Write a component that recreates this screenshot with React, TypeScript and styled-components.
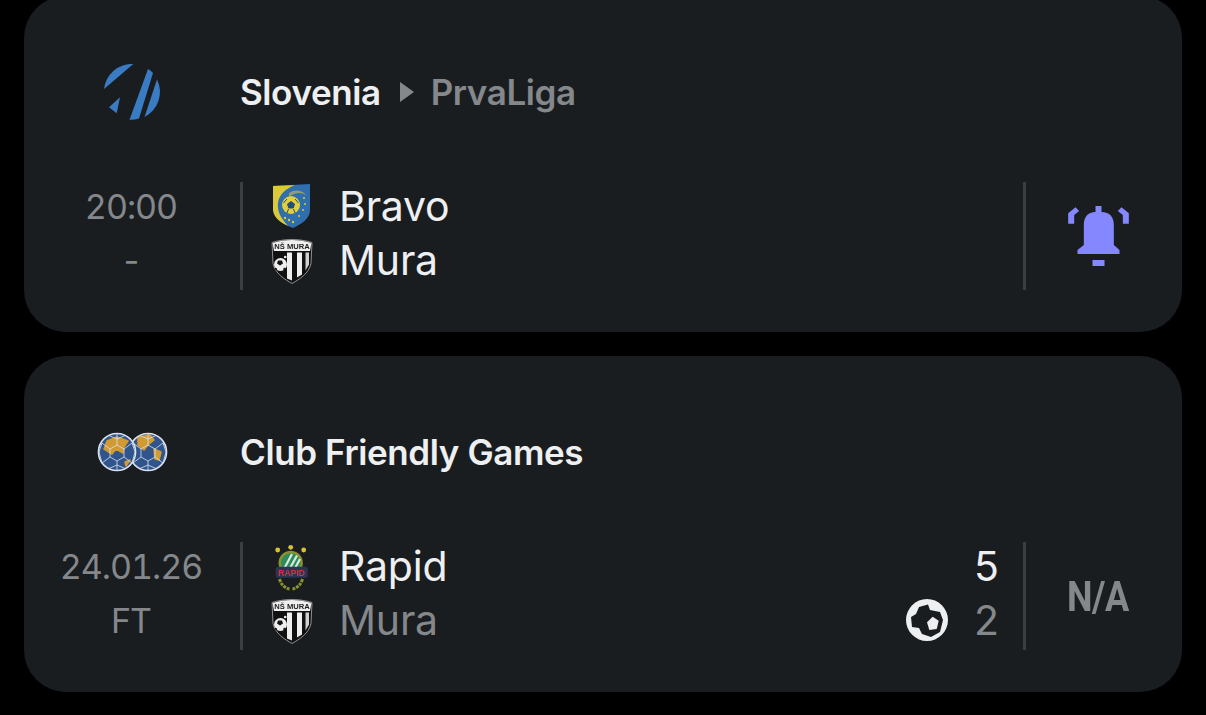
import React from "react";
import styled, { createGlobalStyle } from "styled-components";

const Global = createGlobalStyle`
  html, body { margin: 0; padding: 0; background: #000; overflow: hidden; }
  body { font-family: Inter, "Noto Sans", sans-serif; }
`;

const Page = styled.div`
  display: flex;
  flex-direction: column;
  gap: 24px;
  margin-top: -4px;
  padding: 0 24px;
`;

const Card = styled.section`
  height: 336px;
  background: #1a1d20;
  border-radius: 42px;
  display: flex;
  flex-direction: column;
`;

const Header = styled.header`
  height: 186px;
  display: flex;
  align-items: center;
  padding-top: 6px;
  box-sizing: border-box;
`;

const HeaderLogo = styled.div`
  width: 216px;
  display: flex;
  justify-content: center;
  align-items: center;
  filter: blur(0.3px);
`;

const Title = styled.h2`
  margin: 0;
  display: flex;
  align-items: center;
  font-size: 35px;
  font-weight: 600;
  letter-spacing: -0.4px;
  color: #eeeff1;
`;

const Sub = styled.span`
  color: #85888b;
`;

const Arrow = styled.svg`
  width: 14px;
  height: 20px;
  margin: 0 17px 0 19px;
  fill: #85888b;
`;

const Match = styled.div`
  height: 108px;
  display: flex;
`;

const TimeCol = styled.div`
  width: 214px;
  display: flex;
  flex-direction: column;
  align-items: center;
  font-size: 34px;
  color: #85888b;
  margin-right: 2px;
  font-variant-numeric: tabular-nums;
`;

const TimeLine = styled.div`
  height: 54px;
  line-height: 50px;
  letter-spacing: -1px;
`;

const Teams = styled.div`
  flex: 1;
  border-left: 3px solid #3c3f42;
  border-right: 3px solid #3c3f42;
  display: flex;
  flex-direction: column;
  padding: 0 24px 0 26px;
`;

const TeamRow = styled.div`
  height: 54px;
  display: flex;
  align-items: center;
`;

const Crest = styled.div`
  width: 46px;
  height: 46px;
  flex: none;
  display: flex;
  justify-content: center;
  align-items: center;
  margin: 0 24px 6px 0;
  filter: blur(0.35px);
`;

const Name = styled.span<{ $dim?: boolean }>`
  flex: 1;
  font-size: 41px;
  letter-spacing: -0.2px;
  color: ${(p) => (p.$dim ? "#85888b" : "#eeeff1")};
  position: relative;
  top: -3px;
`;

const Score = styled.span<{ $dim?: boolean }>`
  font-size: 41px;
  margin-left: 26px;
  color: ${(p) => (p.$dim ? "#85888b" : "#eeeff1")};
  position: relative;
  top: -3px;
`;

const ScoreIcon = styled.div`
  width: 42px;
  height: 42px;
  flex: none;
  margin-bottom: 6px;
`;

const Action = styled.div`
  width: 156px;
  box-sizing: border-box;
  display: flex;
  justify-content: center;
  align-items: center;
  padding-right: 12px;
`;

const NA = styled.span`
  font-family: Roboto, sans-serif;
  font-weight: 700;
  font-size: 42px;
  color: #85888b;
  letter-spacing: -0.5px;
  transform: scaleX(0.86);
`;

const BlueLogo = () => (
  <svg width="56" height="56" viewBox="0 0 56 56" fill="#3a7cc4">
    <path d="M0 25 A28 28 0 0 1 29.3 0 Z" />
    <path d="M44 5 A28 28 0 0 1 49 9 L35 54.6 A28 28 0 0 1 25.5 55.8 Z" />
    <path d="M53 15.5 A28 28 0 0 1 40.5 53 Z" />
    <path d="M16 33.3 L12.7 49.3 L5 43.3 Z" />
  </svg>
);

const BravoCrest = () => (
  <svg width="38" height="44" viewBox="0 0 38 44">
    <path d="M0 2 L37 0 V26 C37 35 28 40 20 44 C10 40 1 35 0 26 Z" fill="#2f6fae" />
    <path d="M0 2 L22 1 C12 5 6 11 5 19 C4 28 8 34 15 42 C7 38 1 34 0 26 Z" fill="#dcc93a" />
    <path d="M16 9 C22 5 29 6 33 11 C28 8 22 8 16 13 Z" fill="#dcc93a" opacity="0.55" />
    <circle cx="18" cy="21" r="9" fill="#e3cf3d" />
    <path d="M18 17.5 l3.5 2.5 -1.2 4 h-4.6 l-1.2 -4 Z M10.5 19 l3.5 -4 M25.5 19 l-3.5 -4 M14 29 l1.5 -4 M22 29 l-1.5 -4" fill="#234f7c" stroke="#234f7c" strokeWidth="1" />
    <g fill="#dcc93a">
      <circle cx="31" cy="14" r="1" /><circle cx="32" cy="20" r="1" /><circle cx="30" cy="26" r="1" /><circle cx="26" cy="32" r="1" />
      <circle cx="12" cy="34" r="1.2" /><circle cx="16" cy="36" r="1.2" /><circle cx="20" cy="38" r="1.2" />
    </g>
  </svg>
);

const MuraCrest = () => (
  <svg width="42" height="47" viewBox="0 0 42 46">
    <path d="M1 5 C14 1 28 1 41 5 L40 26 C38 36 28 42 21 46 C14 42 4 36 2 26 Z" fill="#111" stroke="#c4c4c4" strokeWidth="0.7" />
    <path d="M1.5 5.5 C14 1.5 28 1.5 40.5 5.5 L39 13.5 H3 Z" fill="#efefef" />
    <text x="21" y="11.5" textAnchor="middle" fontFamily="Liberation Sans, sans-serif" fontWeight="700" fontSize="7.6" fill="#1c1c1c">NŠ MURA</text>
    <path d="M16 15 H21 V43 L16 41 Z" fill="#efefef" />
    <path d="M26 15 H31 V37 L26 40 Z" fill="#efefef" />
    <path d="M34.5 15 H38 V27 L34.5 33 Z" fill="#d0d0d0" />
    <circle cx="9.5" cy="27" r="6.5" fill="#efefef" />
    <path d="M7 23 l4 0 1 3 -3 2 -3 -2 Z M13 30 l2 1 -1 2 -2 -1 Z M4 30 l2 1 0 2 -2 -1 Z" fill="#141414" />
    <circle cx="14.2" cy="19.5" r="1.3" fill="#efefef" />
  </svg>
);

const RapidCrest = () => (
  <svg width="40" height="46" viewBox="0 0 40 46" style={{ overflow: "visible" }}>
    <g fill="#d8c32e">
      <circle cx="5.7" cy="7" r="2.4" />
      <circle cx="18.7" cy="4.3" r="2.4" />
      <circle cx="31.7" cy="7" r="2.4" />
    </g>
    <circle cx="18.7" cy="20" r="11" fill="#2f8a5c" stroke="#8a9230" strokeWidth="2.4" />
    <path d="M12 26 L20 11 M17 27 L25 12.5 M22 27 L28 16" stroke="#d8ebe0" strokeWidth="2.2" />
    <rect x="3.7" y="23.7" width="32" height="11" rx="2.5" fill="#2a3554" />
    <text x="19.7" y="32.8" textAnchor="middle" fontFamily="Liberation Sans, sans-serif" fontWeight="700" fontSize="8.6" fill="#d8323c">RAPID</text>
    <path d="M7.5 36 Q10 44.5 17.5 46 M30.5 36 Q28 44.5 20.5 46" fill="none" stroke="#8a9230" strokeWidth="3" strokeDasharray="3 1" />
  </svg>
);

const Ball = ({ x, land }: { x: number; land: string }) => (
  <g transform={`translate(${x} 0)`}>
    <circle cx="20" cy="20" r="19" fill="#30548c" />
    <path d={land} fill="#d29a32" stroke="#d29a32" strokeWidth="1.5" strokeLinejoin="round" />
    <g fill="none" stroke="#dbe2ee" strokeWidth="0.8">
      <circle cx="20" cy="20" r="18.6" strokeWidth="1.5" />
      <path d="M20 13 L27 17 L27 25 L20 29 L13 25 L13 17 Z" />
      <path d="M20 13 L20 2 M27 17 L35 11 M27 25 L35 31 M20 29 L20 38 M13 25 L5 31 M13 17 L5 11" />
      <path d="M12 3.5 L20 7 L28 3.5 M5 11 L2 20 L5 31 M35 11 L38 20 L35 31 M12 36.5 L20 33 L28 36.5" />
    </g>
  </g>
);

const FifaBalls = () => (
  <svg width="71" height="40" viewBox="0 0 71 40">
    <Ball x={31} land="M10 5 L22 3 L26 8 L20 13 L16 18 L10 13 Z M26 17 L33 20 L31 28 L27 27 Z" />
    <Ball x={0} land="M10 9 L20 5 L31 9 L27 15 L26 21 L19 17 L15 22 L7 17 Z M28 30 L33 28 L29 34 Z" />
  </svg>
);

const Bell = () => (
  <svg width="61" height="60" viewBox="53 48 182 180" fill="#8587ff">
    <path d="M135 48 H153 V66 C178 66 190 82 190 104 V165 L207 180 V192 H81 V180 L100 165 V104 C100 82 112 66 135 66 Z" />
    <rect x="126" y="210" width="36" height="18" />
    <path d="M53 101 V70 L75 52 L86 63 L71 75 V101 Z" />
    <path d="M235 101 V70 L213 52 L202 63 L217 75 V101 Z" />
  </svg>
);

const Football = () => (
  <svg width="42" height="42" viewBox="0 0 42 42">
    <circle cx="21" cy="21" r="21" fill="#eeeff1" />
    <path d="M13 8 L22 5.5 L24 11 L34 13 L37 21 L34 33 L25 38 L16 35 L13 29 L6 28 L5 18 L10 15 Z" fill="#1a1d20" />
    <path d="M26.7 17.7 L32.7 21.7 L30.7 30 L23.3 31 L21 23.3 Z" fill="#eeeff1" />
  </svg>
);

export default function App() {
  return (
    <>
      <Global />
      <Page>
        <Card>
          <Header>
            <HeaderLogo><BlueLogo /></HeaderLogo>
            <Title>
              Slovenia
              <Arrow viewBox="0 0 14 20"><path d="M0 0 L14 10 L0 20 Z" /></Arrow>
              <Sub>PrvaLiga</Sub>
            </Title>
          </Header>
          <Match>
            <TimeCol>
              <TimeLine>20:00</TimeLine>
              <TimeLine>-</TimeLine>
            </TimeCol>
            <Teams>
              <TeamRow><Crest><BravoCrest /></Crest><Name>Bravo</Name></TeamRow>
              <TeamRow><Crest><MuraCrest /></Crest><Name>Mura</Name></TeamRow>
            </Teams>
            <Action><Bell /></Action>
          </Match>
        </Card>
        <Card>
          <Header>
            <HeaderLogo><FifaBalls /></HeaderLogo>
            <Title>Club Friendly Games</Title>
          </Header>
          <Match>
            <TimeCol>
              <TimeLine>24.01.26</TimeLine>
              <TimeLine>FT</TimeLine>
            </TimeCol>
            <Teams>
              <TeamRow><Crest><RapidCrest /></Crest><Name>Rapid</Name><Score>5</Score></TeamRow>
              <TeamRow><Crest><MuraCrest /></Crest><Name $dim>Mura</Name><ScoreIcon><Football /></ScoreIcon><Score $dim>2</Score></TeamRow>
            </Teams>
            <Action><NA>N/A</NA></Action>
          </Match>
        </Card>
      </Page>
    </>
  );
}
